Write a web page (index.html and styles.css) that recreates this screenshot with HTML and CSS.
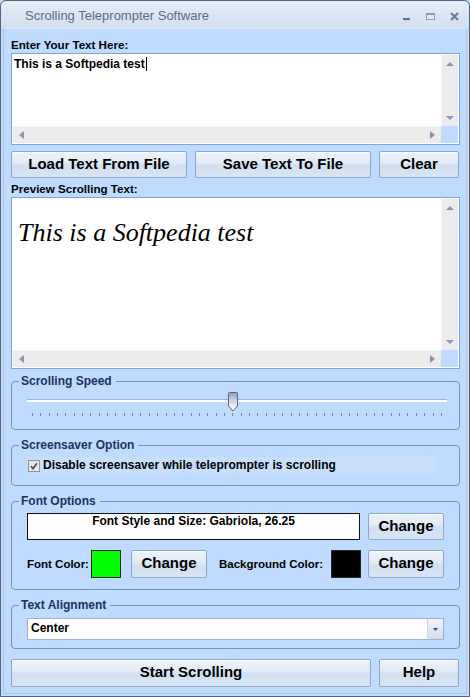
FILE: index.html
```html
<!DOCTYPE html>
<html>
<head>
<meta charset="utf-8">
<title>Scrolling Teleprompter Software</title>
<link rel="stylesheet" href="styles.css">
</head>
<body>
<div class="window">
  <div class="titlebar">
    <span class="title">Scrolling Teleprompter Software</span>
    <svg class="controls" width="64" height="27" viewBox="0 0 64 27">
      <rect x="3" y="17" width="7" height="2" fill="#5f7492"/>
      <rect x="3" y="19" width="7" height="1" fill="#c9d6e7"/>
      <rect x="26.5" y="12.5" width="8" height="6" fill="#e3eaf4" stroke="#8c9bb1"/>
      <rect x="26" y="12" width="9" height="2" fill="#8c9bb1"/>
      <path d="M51 12 L58 19 M58 12 L51 19" stroke="#6c7f9c" stroke-width="2.3" fill="none"/>
    </svg>
  </div>
  <div class="client">
    <div class="label first">Enter Your Text Here:</div>
    <div class="memo memo-input">
      <div class="memo-body input-body"><span class="input-text">This is a Softpedia test</span><span class="caret"></span></div>
      <div class="vscroll">
        <svg width="8" height="4"><path d="M0 4 L4 0 L8 4 Z" fill="#8595b3"/></svg>
        <svg width="8" height="4"><path d="M0 0 L8 0 L4 4 Z" fill="#8595b3"/></svg>
      </div>
      <div class="hscroll">
        <svg width="5" height="8"><path d="M5 0 L5 8 L0 4 Z" fill="#8595b3"/></svg>
        <svg width="5" height="8"><path d="M0 0 L0 8 L5 4 Z" fill="#8595b3"/></svg>
      </div>
      <div class="corner"></div>
    </div>

    <div class="btn-row top-row">
      <div class="btn">Load Text From File</div>
      <div class="btn">Save Text To File</div>
      <div class="btn">Clear</div>
    </div>

    <div class="label second">Preview Scrolling Text:</div>
    <div class="memo memo-preview">
      <div class="memo-body preview-body"><span class="preview-text">This is a Softpedia test</span></div>
      <div class="vscroll">
        <svg width="8" height="4"><path d="M0 4 L4 0 L8 4 Z" fill="#8595b3"/></svg>
        <svg width="8" height="4"><path d="M0 0 L8 0 L4 4 Z" fill="#8595b3"/></svg>
      </div>
      <div class="hscroll">
        <svg width="5" height="8"><path d="M5 0 L5 8 L0 4 Z" fill="#8595b3"/></svg>
        <svg width="5" height="8"><path d="M0 0 L0 8 L5 4 Z" fill="#8595b3"/></svg>
      </div>
      <div class="corner"></div>
    </div>

    <fieldset class="group speed">
      <legend>Scrolling Speed</legend>
      <div class="slider">
        <div class="track"></div>
        <svg class="thumb" width="12" height="20" viewBox="0 0 12 20">
          <defs>
            <linearGradient id="tg" x1="0" y1="0" x2="0" y2="1">
              <stop offset="0" stop-color="#8e9cb2"/>
              <stop offset="0.45" stop-color="#cfd7e3"/>
              <stop offset="1" stop-color="#ffffff"/>
            </linearGradient>
          </defs>
          <path d="M1.5 1.5 Q1.5 0.5 2.5 0.5 L9.5 0.5 Q10.5 0.5 10.5 1.5 L10.5 14 L6 19 L1.5 14 Z" fill="url(#tg)" stroke="#56687f"/>
        </svg>
      </div>
      <div class="ticks"><i></i><i></i><i></i><i></i><i></i><i></i><i></i><i></i><i></i><i></i><i></i><i></i><i></i><i></i><i></i><i></i><i></i><i></i><i></i><i></i><i></i><i></i><i></i><i></i><i></i><i></i><i></i><i></i><i></i><i></i><i></i><i></i><i></i><i></i><i></i><i></i><i></i><i></i><i></i><i></i><i></i><i></i><i></i><i></i><i></i><i></i><i></i><i></i><i></i><i></i></div>
    </fieldset>

    <fieldset class="group saver">
      <legend>Screensaver Option</legend>
      <div class="check-row">
        <svg class="checkbox" width="12" height="12" viewBox="0 0 12 12">
          <rect x="0.5" y="0.5" width="11" height="11" fill="#e4e6e9" stroke="#8f9296"/>
          <path d="M3 6.2 L5 8.6 L9 3.2" stroke="#4a4f57" stroke-width="1.6" fill="none"/>
        </svg>
        <span class="check-label">Disable screensaver while teleprompter is scrolling</span>
      </div>
    </fieldset>

    <fieldset class="group font">
      <legend>Font Options</legend>
      <div class="font-row1">
        <div class="font-box">Font Style and Size: Gabriola, 26.25</div>
        <div class="btn change">Change</div>
      </div>
      <div class="font-row2">
        <span class="fc-label">Font Color:</span>
        <span class="swatch green"></span>
        <div class="btn change c1">Change</div>
        <span class="bg-label">Background Color:</span>
        <span class="swatch black"></span>
        <div class="btn change c2">Change</div>
      </div>
    </fieldset>

    <fieldset class="group align">
      <legend>Text Alignment</legend>
      <div class="combo">
        <span class="combo-text">Center</span>
        <span class="combo-btn"><svg width="5" height="3"><path d="M0 0 L5 0 L2.5 3 Z" fill="#3f5070"/></svg></span>
      </div>
    </fieldset>

    <div class="btn-row bottom-row">
      <div class="btn">Start Scrolling</div>
      <div class="btn">Help</div>
    </div>
  </div>
</div>
</body>
</html>
```

FILE: styles.css
```css
* { box-sizing: border-box; }
html, body { margin: 0; padding: 0; }
body {
  width: 470px;
  height: 697px;
  font-family: "Liberation Sans", Arial, sans-serif;
  font-size: 12px;
  color: #000;
  background: #bfdbff;
  overflow: hidden;
}
.window {
  width: 470px;
  height: 697px;
  border: 1px solid #4b6385;
  border-radius: 6px 6px 0 0;
  background: #c6daf2;
  display: flex;
  flex-direction: column;
  overflow: hidden;
}
.titlebar {
  height: 27px;
  flex: none;
  display: flex;
  background: linear-gradient(to bottom, #e6eef8 0%, #dbe6f4 50%, #d2e0f1 100%);
  border-radius: 5px 5px 0 0;
}
.title {
  padding: 3px 0 0 24px;
  font-size: 13px;
  line-height: 24px;
  color: #5e6c80;
}
.controls { margin-left: auto; margin-right: 5px; }

.client {
  flex: 1;
  margin: 0 2px 2px;
  border: 1px solid #a9c4e8;
  border-top-color: #dfe9f6;
  background: #bfdbff;
  padding: 9px 6px 0 7px;
  display: flex;
  flex-direction: column;
}
.label {
  font-weight: bold;
  line-height: 14px;
  height: 14px;
  font-size: 11.6px;
}
.label.second { margin-top: 4px; }

.memo {
  margin-top: 1px;
  border: 1px solid #7ea3db;
  padding: 1px;
  background: #fff;
  display: grid;
  grid-template-columns: 1fr 17px;
  grid-template-rows: 1fr 17px;
}
.memo-input { height: 92px; }
.memo-preview { height: 172px; }
.memo-body { overflow: hidden; }
.input-body {
  padding: 2px 0 0 1px;
  font-weight: bold;
  line-height: 14px;
  white-space: nowrap;
}
.caret {
  display: inline-block;
  width: 1px;
  height: 14px;
  background: #000;
  vertical-align: top;
  margin-left: 1px;
}
.preview-body {
  padding: 19px 0 0 5px;
  white-space: nowrap;
}
.preview-text {
  font-family: "Liberation Serif", "Times New Roman", serif;
  font-style: italic;
  font-size: 26px;
  line-height: 30px;
  color: #000;
}
.vscroll {
  background: #ececec;
  border-left: 1px solid #f7f7f7;
  display: flex;
  flex-direction: column;
  justify-content: space-between;
  align-items: center;
  padding: 7px 0 6px;
}
.vscroll svg, .hscroll svg { display: block; }
.hscroll {
  background: #ececec;
  border-top: 1px solid #f7f7f7;
  display: flex;
  justify-content: space-between;
  align-items: center;
  padding: 0 6px;
}
.corner { background: #bfdbff; }

.btn-row { display: grid; column-gap: 8px; }
.top-row {
  margin-top: 6px;
  height: 27px;
  grid-template-columns: 176px 176px 80px;
}
.bottom-row {
  margin-top: 10px;
  height: 28px;
  grid-template-columns: 360px 80px;
}
.btn {
  border: 1px solid #8ea7ca;
  border-radius: 2px;
  background: linear-gradient(to bottom, #eef3fa 0%, #e2ebf6 42%, #d0dff1 55%, #d8e5f4 100%);
  box-shadow: inset 0 1px 0 #f9fbfe;
  font-weight: bold;
  font-size: 15px;
  line-height: 23px;
  text-align: center;
  white-space: nowrap;
}
.bottom-row .btn { line-height: 24px; }

.group {
  margin: 0;
  padding: 0 15px;
  border: 1px solid #7193c6;
  border-radius: 4px;
  min-width: 0;
}
.group legend {
  margin-left: -8px;
  padding: 0 4px 0 2px;
  font-weight: bold;
  font-size: 12px;
  line-height: 14px;
  color: #1b3460;
}
.speed { margin-top: 5px; height: 56px; }
.saver { margin-top: 8px; height: 48px; }
.font { margin-top: 8px; height: 96px; }
.align { margin-top: 8px; height: 51px; }

.slider {
  position: relative;
  margin-top: 4px;
  padding-top: 7px;
  height: 20px;
  margin-right: -3px;
}
.track {
  height: 3px;
  border-top: 1px solid #9fb3d1;
  background: #ffffff;
}
.thumb {
  position: absolute;
  left: 200px;
  top: 0;
}
.ticks {
  margin: 1px 2px 0 5px;
  height: 3px;
  display: flex;
  justify-content: space-between;
}
.ticks i {
  display: block;
  width: 1px;
  height: 3px;
  background: #6d88b0;
}

.check-row {
  margin-top: 5px;
  height: 17px;
  width: 410px;
  background: #c7defc;
  display: flex;
  align-items: center;
  padding-left: 1px;
}
.checkbox { display: block; flex: none; }
.check-label {
  margin-left: 3px;
  font-weight: bold;
  line-height: 17px;
  white-space: nowrap;
}

.font-row1 {
  margin-top: 5px;
  display: flex;
  height: 27px;
}
.font-box {
  width: 333px;
  height: 27px;
  border: 1px solid #111;
  background: #fff;
  font-weight: bold;
  line-height: 14px;
  text-align: center;
}
.change { width: 76px; height: 27px; margin-left: 8px; }
.font-row2 {
  margin-top: 10px;
  display: flex;
  align-items: center;
  height: 28px;
}
.fc-label, .bg-label {
  font-weight: bold;
  font-size: 11.5px;
  line-height: 14px;
  white-space: nowrap;
}
.fc-label { width: 64px; }
.bg-label { width: 112px; margin-left: 12px; }
.swatch {
  display: block;
  width: 30px;
  height: 28px;
  border: 1px solid #222;
}
.swatch.green { background: #00ff00; }
.swatch.black { background: #000; }
.font-row2 .change { height: 28px; line-height: 24px; }
.c1 { margin-left: 10px; }
.c2 { margin-left: 7px; }

.combo {
  margin-top: 6px;
  height: 22px;
  border: 1px solid #9cb3d3;
  background: #fff;
  display: flex;
}
.combo-text {
  flex: 1;
  padding-left: 3px;
  font-weight: bold;
  line-height: 18px;
}
.combo-btn {
  width: 16px;
  border-left: 1px solid #c8d6e8;
  background: linear-gradient(to bottom, #f1f5fa 0%, #e1e9f4 50%, #d3deec 100%);
  display: flex;
  align-items: center;
  justify-content: center;
}
.combo-btn svg { display: block; }
```
